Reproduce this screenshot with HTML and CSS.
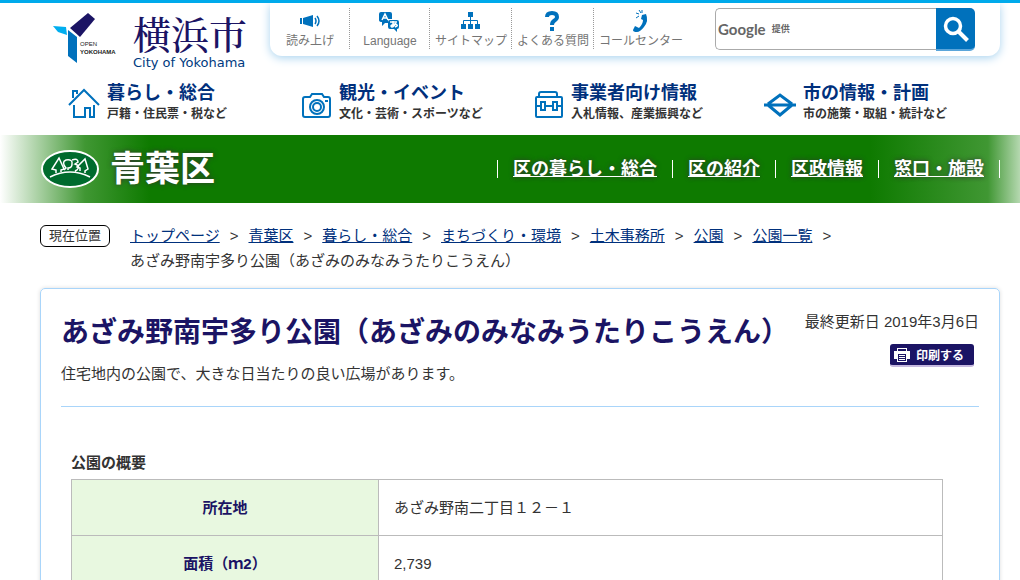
FILE: index.html
```html
<!DOCTYPE html>
<html lang="ja">
<head>
<meta charset="utf-8">
<meta name="viewport" content="width=device-width, initial-scale=1">
<title>あざみ野南宇多り公園（あざみのみなみうたりこうえん） 横浜市青葉区</title>
<link rel="stylesheet" href="styles.css">
</head>
<body>
<header class="site-header">
  <div class="header-top">
    <a class="brand" href="#">
      <svg class="brand-mark" viewBox="0 0 65 53" aria-hidden="true">
        <path fill="#1b1464" d="M36 0 43 6 28 24 18 15Z"/>
        <path fill="#00aeef" d="M1 13 14 14 15 22 6 19Z"/>
        <path fill="#0071bc" d="M16 17 25 24V50L16 43Z"/>
        <text class="mark-text mark-thin" x="28" y="33">OPEN</text>
        <text class="mark-text" x="28" y="41">YOKOHAMA</text>
      </svg>
      <span class="brand-name"><span class="brand-ja">横浜市</span><span class="brand-en">City of Yokohama</span></span>
    </a>
    <div class="tools">
      <ul class="tool-list">
        <li><a href="#"><svg viewBox="0 0 22 22" aria-hidden="true"><path fill="#0071bc" d="M1 8h2v6H1zM4 8 14 5v12L4 14z"/><path fill="none" stroke="#0071bc" stroke-width="1.5" d="M16 8q2 3 0 6M18 6q4 5 0 10"/></svg>読み上げ</a></li>
        <li><a href="#"><svg viewBox="0 0 22 22" aria-hidden="true"><path fill="#0071bc" d="M2 2h9q2 0 2 2v5H9v4H6l-3 3v-4Q0 12 0 10V4Q0 2 2 2Z"/><path fill="#0071bc" d="M11 10h7q2 0 2 2v5q0 2-2 2v3l-3-3h-4q-2 0-2-2v-5q0-2 2-2Z"/><path fill="none" stroke="#fff" stroke-width="1.5" d="m3 10 3-6 3 6M4 8h4M11 12h7M14 11v6M17 13q-2 4-4 4-2-1 0-2 3-2 5 0 1 1-2 2"/></svg>Language</a></li>
        <li><a href="#"><svg viewBox="0 0 22 22" aria-hidden="true"><path fill="#0071bc" d="M8 2h5v5H8zM1 14h5v5H1zM8 14h5v5H8zM15 14h5v5h-5z"/><path fill="none" stroke="#0071bc" d="M10.500 7v7M3.500 14v-3.500h14V14"/></svg>サイトマップ</a></li>
        <li><a href="#"><svg viewBox="0 0 22 22" aria-hidden="true"><path fill="none" stroke="#0071bc" stroke-width="4" d="M5 7q0-4 5-4t5 4q0 2-2.500 3.500T10 15"/><path fill="#0071bc" d="M8 17h4v4H8z"/></svg>よくある質問</a></li>
        <li><a href="#"><svg viewBox="0 0 22 22" aria-hidden="true"><path fill="#0071bc" d="m12 5 4-1q3 7-2 13-4 5-7 5-4 0-4-2l2-4 4 2q4-4 4-8l-2-1z"/><path fill="none" stroke="#0071bc" d="m6 3 3 1M9 0l2 3M6 8l3-2M12 0v3"/></svg>コールセンター</a></li>
      </ul>
      <form class="search" role="search">
        <div class="search-field">
          <label class="search-label" for="q"><span class="google">Google</span><span class="offer">提供</span></label>
          <input id="q" type="text">
        </div>
        <button type="button" aria-label="検索"><svg viewBox="0 0 26 26" aria-hidden="true"><circle cx="10" cy="10" r="7.500" fill="none" stroke="#fff" stroke-width="3.500"/><path d="m15.500 15.500 9 9" stroke="#fff" stroke-width="4"/></svg></button>
      </form>
    </div>
  </div>
  <nav class="global-nav">
    <a href="#"><svg viewBox="0 0 32 32" aria-hidden="true"><path d="M1 17 16 2l15 15M5 10V3h4v3M6 17v12h11v-9h5v9h4V17"/></svg><span class="nav-copy"><strong>暮らし・総合</strong><small>戸籍・住民票・税など</small></span></a>
    <a href="#"><svg viewBox="0 0 32 32" aria-hidden="true"><path d="M5 9h5l2-3h10l2 3h4q2 0 2 2v16q0 2-2 2H5q-2 0-2-2V11q0-2 2-2ZM25 13h3"/><circle cx="17" cy="19" r="7"/><circle cx="17" cy="19" r="4"/></svg><span class="nav-copy"><strong>観光・イベント</strong><small>文化・芸術・スポーツなど</small></span></a>
    <a href="#"><svg viewBox="0 0 32 32" aria-hidden="true"><path d="M7 9V6q0-2 2-2h14q2 0 2 2v3M5 9h24q1 0 1 1v18q0 1-1 1H5q-1 0-1-1V10q0-1 1-1ZM4 18h5M13 18h8M25 18h5M9 14h4v8H9zM21 14h4v8h-4z"/></svg><span class="nav-copy"><strong>事業者向け情報</strong><small>入札情報、産業振興など</small></span></a>
    <a href="#"><svg viewBox="0 0 32 32" aria-hidden="true"><path stroke-width="3" d="M4 16 16 7l12 9M4 17l12 10 12-10M0 17h32"/></svg><span class="nav-copy"><strong>市の情報・計画</strong><small>市の施策・取組・統計など</small></span></a>
  </nav>
</header>

<div class="ward">
  <div class="ward-inner">
    <a class="ward-brand" href="#">
      <svg viewBox="0 0 60 42" aria-hidden="true"><ellipse cx="30" cy="21" rx="28" ry="18" fill="#006b2d" stroke="#fff" stroke-width="2"/><path fill="none" stroke="#fff" stroke-width="1.500" d="M10 29Q30 19 50 29M16 25v-3l-4-1 7-11 5 11-3 1v2M24 22l2-2q-5-6 0-8 7-1 6 4 0 4-4 4v2M32 12q6-2 6 2l-3 2q6 2 2 6l-2 1M40 23v-3l-3-1 8-8 3 10-3 2v2"/></svg>
      <span>青葉区</span>
    </a>
    <ul class="ward-nav">
      <li><a href="#">区の暮らし・総合</a></li>
      <li><a href="#">区の紹介</a></li>
      <li><a href="#">区政情報</a></li>
      <li><a href="#">窓口・施設</a></li>
    </ul>
  </div>
</div>

<nav class="breadcrumb">
  <span class="here">現在位置</span>
  <ol>
    <li><a href="#">トップページ</a></li>
    <li><a href="#">青葉区</a></li>
    <li><a href="#">暮らし・総合</a></li>
    <li><a href="#">まちづくり・環境</a></li>
    <li><a href="#">土木事務所</a></li>
    <li><a href="#">公園</a></li>
    <li><a href="#">公園一覧</a></li>
    <li>あざみ野南宇多り公園（あざみのみなみうたりこうえん）</li>
  </ol>
</nav>

<main class="article">
  <div class="article-head">
    <div>
      <h1>あざみ野南宇多り公園（あざみのみなみうたりこうえん）</h1>
      <p>住宅地内の公園で、大きな日当たりの良い広場があります。</p>
    </div>
    <div class="meta">
      <p>最終更新日 2019年3月6日</p>
      <button class="print" type="button"><svg viewBox="0 0 16 14" aria-hidden="true"><path fill="#fff" d="M3 0h10v3h3v8h-3v3H3v-3H0V3h3z"/><path fill="#1b1464" d="M4 1h8v2H4zM4 6h8v7H4z"/><path stroke="#fff" d="M5 7.500h6M5 9.500h6M5 11.500h6"/></svg>印刷する</button>
    </div>
  </div>
  <table class="facts">
    <caption>公園の概要</caption>
    <tbody>
      <tr><th scope="row">所在地</th><td>あざみ野南二丁目１２－１</td></tr>
      <tr><th scope="row">面積（ｍ2）</th><td>2,739</td></tr>
    </tbody>
  </table>
</main>
</body>
</html>
```
FILE: styles.css
```css
* { box-sizing: border-box; }

body {
  margin: 0;
  border-top: 3px solid #00aaeb;
  background: #fff;
  color: #333;
  font-family: "Liberation Sans", "Noto Sans CJK JP", sans-serif;
  font-size: 15px;
  line-height: 25px;
}

ul, ol { margin: 0; padding: 0; list-style: none; }
p { margin: 0; }
a { color: #00307c; }

.header-top {
  display: flex;
  justify-content: space-between;
  padding: 0 20px 0 52px;
}

.brand {
  display: flex;
  gap: 16px;
  padding-top: 10px;
  color: #1b1464;
  text-decoration: none;
}
.brand-mark { width: 65px; height: 53px; }
.mark-text { fill: #222; font: bold 6px "Liberation Sans", sans-serif; }
.mark-thin { font-weight: normal; }
.brand-name { display: flex; flex-direction: column; white-space: nowrap; }
.brand-ja {
  font-family: "Noto Serif CJK JP", "Noto Sans CJK JP", serif;
  font-size: 38px;
  font-weight: 500;
  line-height: 40px;
}
.brand-en {
  color: #003a80;
  font-family: "DejaVu Sans", sans-serif;
  font-size: 13px;
  line-height: 20px;
}

.tools {
  display: flex;
  justify-content: space-between;
  width: 730px;
  height: 53px;
  padding: 5px 25px 0 0;
  border-radius: 0 0 12px 12px;
  box-shadow: 0 2px 10px #a9d3ef;
}
.tool-list { display: flex; }
.tool-list li {
  min-width: 80px;
  height: 41px;
  padding: 0 4px 0 5px;
  border-right: 1px dotted #999;
}
.tool-list li:last-child { border: 0; }
.tool-list a {
  display: flex;
  flex-direction: column;
  align-items: center;
  padding-top: 2px;
  color: #757575;
  font-size: 12px;
  line-height: 18px;
  text-decoration: none;
  white-space: nowrap;
}
.tool-list svg { width: 22px; height: 22px; }

.search { display: flex; width: 260px; }
.search-field {
  display: flex;
  flex: 1;
  align-items: center;
  min-width: 0;
  height: 42px;
  border: 1px solid #aaa;
  border-right: 0;
  border-radius: 5px 0 0 5px;
}
.search-label { display: flex; flex: none; align-items: center; gap: 6px; padding-left: 2px; color: #666; }
.google { font-family: Lato, sans-serif; font-size: 15px; font-weight: bold; }
.offer { font-size: 9px; font-weight: bold; }
.search input { flex: 1; width: 0; min-width: 0; height: 36px; border: 0; background: none; font: inherit; }
.search button {
  flex: none;
  width: 39px;
  height: 43px;
  padding: 0;
  border: 0;
  border-bottom: 2px solid #5aa5da;
  border-radius: 0 5px 5px 0;
  background: #0071bc;
}
.search button svg { width: 26px; height: 26px; vertical-align: middle; }

.global-nav {
  display: grid;
  grid-template-columns: repeat(4, 1fr);
  padding: 9px 24px 11px 68px;
}
.global-nav a { display: flex; gap: 7px; text-decoration: none; white-space: nowrap; }
.global-nav svg {
  width: 32px;
  height: 32px;
  margin-top: 6px;
  fill: none;
  stroke: #0071bc;
  stroke-width: 2;
}
.nav-copy { display: flex; flex-direction: column; }
.nav-copy strong { font-size: 18px; line-height: 22px; }
.nav-copy small { color: #333; font-size: 12px; font-weight: bold; line-height: 20px; }

.ward {
  background: linear-gradient(90deg, #fff 0, #409733 85px, #0e7a00 150px, #0e7a00 calc(100% - 150px), #409733 calc(100% - 32px), #b5d8b0 100%);
}
.ward-inner {
  display: flex;
  align-items: center;
  justify-content: space-between;
  height: 68px;
  padding: 0 20px 0 40px;
}
.ward a { color: #fff; text-shadow: 0 0 5px #333; }
.ward-brand {
  display: flex;
  align-items: center;
  gap: 10px;
  font-size: 35px;
  font-weight: bold;
  line-height: 64px;
  text-decoration: none;
}
.ward-brand svg { width: 60px; height: 42px; }
.ward-nav { display: flex; }
.ward-nav li {
  padding: 0 15px;
  border-right: 1px solid #fff;
  font-size: 18px;
  font-weight: bold;
  line-height: 18px;
}
.ward-nav li:first-child { border-left: 1px solid #fff; }

.breadcrumb { display: flex; align-items: flex-start; gap: 20px; padding: 20px 20px 15px 40px; }
.here {
  flex: none;
  width: 70px;
  margin-top: 2px;
  border: 1px solid #000;
  border-radius: 6px;
  font-size: 13px;
  line-height: 20px;
  text-align: center;
}
.breadcrumb ol { display: flex; flex-wrap: wrap; }
.breadcrumb li:not(:last-child)::after { content: ">"; padding: 0 10px; }

.article {
  margin: 0 20px 0 40px;
  padding: 20px 20px 40px;
  border: 1px solid #a9d5fa;
  border-radius: 5px;
  box-shadow: 0 0 4px #ddd;
}
.article-head {
  display: flex;
  justify-content: space-between;
  padding-bottom: 20px;
  border-bottom: 1px solid #a9d5fa;
}
h1 { margin: 0 0 4px; color: #1b1464; font-size: 28px; line-height: 48px; white-space: nowrap; }
.meta { flex: none; display: flex; flex-direction: column; align-items: flex-end; gap: 10px; }
.print {
  display: flex;
  align-items: center;
  gap: 6px;
  width: 84px;
  height: 23px;
  margin-right: 5px;
  padding: 0 4px;
  border: 0;
  border-bottom: 2px solid #c5b8df;
  border-radius: 3px;
  background: #1b1464;
  color: #fff;
  font: bold 12px "Liberation Sans", "Noto Sans CJK JP", sans-serif;
  white-space: nowrap;
}
.print svg { width: 16px; height: 14px; }

.facts { width: 95%; margin: 43px 0 0 10px; border-collapse: collapse; }
.facts caption { padding-bottom: 4px; font-weight: bold; text-align: left; }
.facts th, .facts td { height: 56px; padding: 15px; border: 1px solid #bbb; }
.facts th { width: 307px; background: #e8f8e0; color: #1b1464; }
```
